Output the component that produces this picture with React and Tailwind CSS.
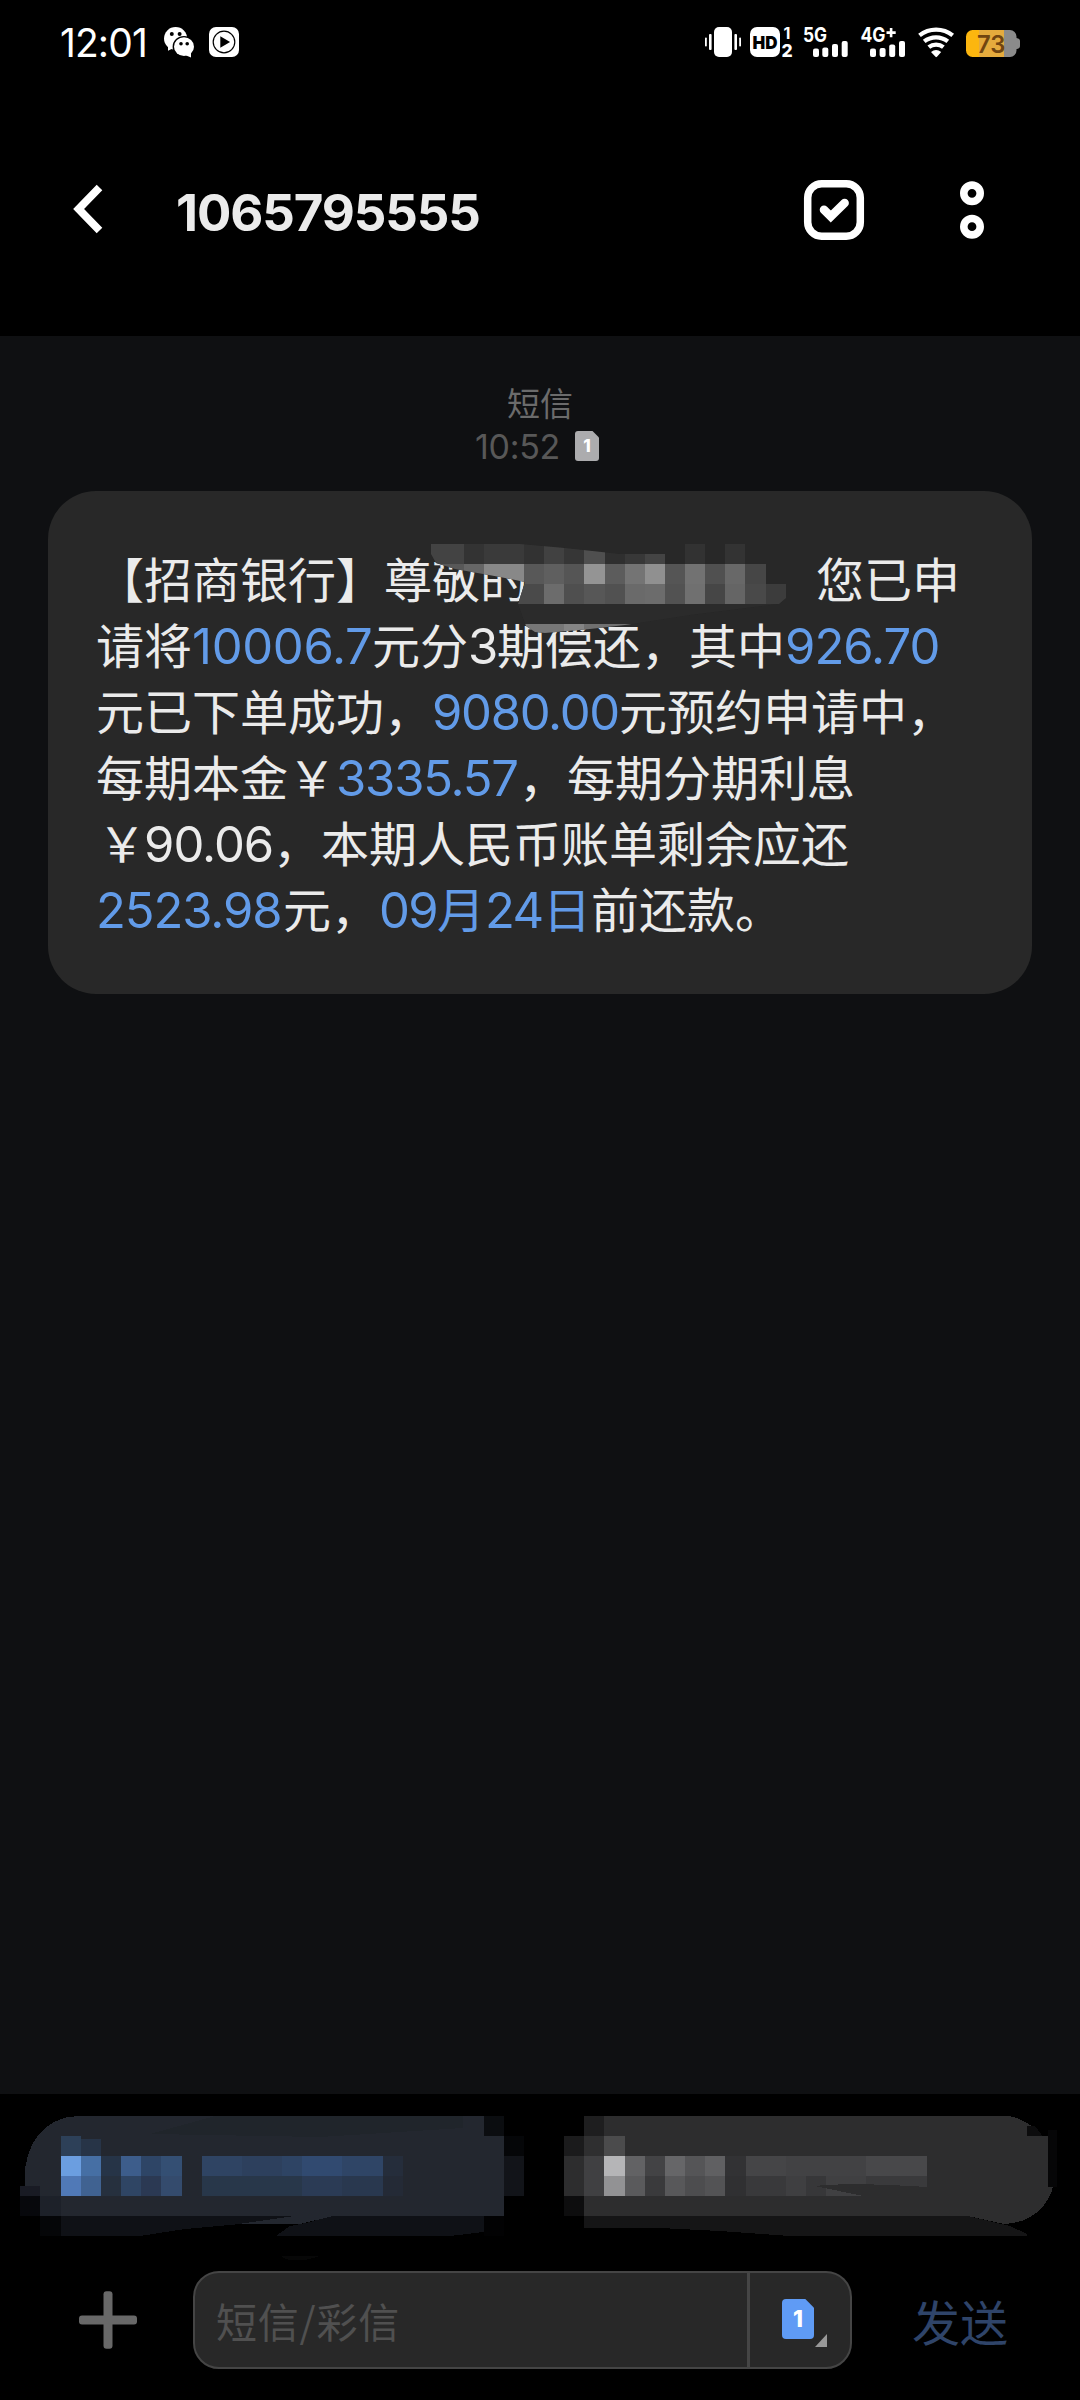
import React from 'react';

const UI_FONT = "font-['Inter','Noto_Sans_CJK_SC',sans-serif]";

// [x, y, width, height, fill]
const nameTiles = [
    [430, 544, 34, 20, '#434343'],
    [464, 544, 20, 20, '#333333'],
    [484, 544, 40, 20, '#3a3a3a'],
    [524, 544, 20, 20, '#323232'],
    [544, 544, 20, 20, '#414141'],
    [564, 544, 20, 20, '#363636'],
    [584, 544, 21, 20, '#4f4f4f'],
    [605, 544, 20, 20, '#2f2f2f'],
    [625, 544, 20, 20, '#383838'],
    [645, 544, 20, 20, '#444444'],
    [685, 544, 20, 20, '#323232'],
    [725, 544, 20, 20, '#333333'],
    [430, 564, 34, 20, '#585858'],
    [464, 564, 20, 20, '#666666'],
    [484, 564, 40, 20, '#888888'],
    [524, 564, 20, 20, '#585858'],
    [544, 564, 20, 20, '#5f5f5f'],
    [564, 564, 20, 20, '#555555'],
    [584, 564, 21, 20, '#949494'],
    [605, 564, 20, 20, '#5c5c5c'],
    [625, 564, 20, 20, '#747474'],
    [645, 564, 20, 20, '#909090'],
    [665, 564, 20, 20, '#555555'],
    [685, 564, 20, 20, '#727272'],
    [705, 564, 20, 20, '#505050'],
    [725, 564, 20, 20, '#686868'],
    [745, 564, 21, 20, '#464646'],
    [510, 584, 34, 20, '#4a4a4a'],
    [544, 584, 20, 20, '#6c6c6c'],
    [564, 584, 20, 20, '#4f4f4f'],
    [584, 584, 21, 20, '#575757'],
    [605, 584, 20, 20, '#515151'],
    [625, 584, 20, 20, '#6a6a6a'],
    [645, 584, 20, 20, '#6c6c6c'],
    [665, 584, 20, 20, '#525252'],
    [685, 584, 20, 20, '#707070'],
    [705, 584, 20, 20, '#464646'],
    [725, 584, 20, 20, '#656565'],
    [745, 584, 21, 20, '#494949'],
    [766, 584, 20, 20, '#3c3c3c'],
    [510, 604, 270, 20, '#2b2b2b'],
    [510, 624, 54, 10, '#777777'],
    [564, 624, 20, 10, '#858585'],
    [584, 624, 50, 10, '#707070']
];

const blueTiles = [
    [20, 2186, 20, 10, '#191b24'],
    [20, 2196, 20, 20, '#07080c'],
    [40, 2196, 20.5, 20, '#1d2129'],
    [40, 2216, 20.5, 20, '#050608'],
    [60.5, 2216, 423, 20, '#0f1116'],
    [483.5, 2116, 20, 19.5, '#0b0d10'],
    [503.5, 2135.5, 20.5, 20, '#050608'],
    [503.5, 2155.5, 20.5, 40.5, '#121419'],
    [483.5, 2216, 20, 20, '#020203'],
    [60.5, 2135.5, 20.3, 20, '#2d4058'],
    [80.8, 2139, 20, 16.5, '#273447'],
    [60.5, 2155.5, 20.3, 20.5, '#6b9ee0'],
    [80.8, 2155.5, 20.2, 20.5, '#466fa4'],
    [101, 2155.5, 20, 20.5, '#263447'],
    [121, 2155.5, 20.2, 20.5, '#3d5d8b'],
    [141.2, 2155.5, 20, 20.5, '#2e4566'],
    [161.2, 2155.5, 20.3, 20.5, '#344f73'],
    [201.5, 2155.5, 40, 20.5, '#2f4463'],
    [241.5, 2155.5, 40, 20.5, '#2d405d'],
    [281.5, 2155.5, 20, 20.5, '#2e4464'],
    [301.5, 2155.5, 40.5, 20.5, '#314a70'],
    [342, 2155.5, 41, 20.5, '#2f4566'],
    [383, 2155.5, 20, 20.5, '#252d3b'],
    [60.5, 2176, 20.3, 20, '#5079b7'],
    [80.8, 2176, 20.2, 20, '#406291'],
    [101, 2176, 20, 20, '#26303e'],
    [121, 2176, 20.2, 20, '#2f4564'],
    [141.2, 2176, 20, 20, '#2b3953'],
    [161.2, 2176, 20.3, 20, '#344b6d'],
    [201.5, 2176, 100, 20, '#28374a'],
    [301.5, 2176, 40.5, 20, '#2b3b55'],
    [342, 2176, 41, 20, '#29384f'],
    [383, 2176, 20, 20, '#242a36']
];

const greyTiles = [
    [564, 2135.5, 20, 20, '#1b1b1c'],
    [584, 2135.5, 20.4, 20, '#2f2f30'],
    [604.4, 2135.5, 20.3, 20, '#4b4b4c'],
    [564, 2155.5, 20, 40.5, '#2d2d2e'],
    [584, 2155.5, 20.4, 40.5, '#404042'],
    [604.4, 2155.5, 20.3, 20.5, '#b5b5b7'],
    [624.7, 2155.5, 20, 20.5, '#626264'],
    [644.7, 2155.5, 20, 20.5, '#434345'],
    [664.7, 2155.5, 20, 20.5, '#666668'],
    [684.7, 2155.5, 20.3, 20.5, '#555557'],
    [705, 2155.5, 20.3, 20.5, '#606062'],
    [725.3, 2155.5, 20.2, 20.5, '#323234'],
    [745.5, 2155.5, 40, 20.5, '#454547'],
    [785.5, 2155.5, 80.5, 20.5, '#424244'],
    [866, 2155.5, 61, 20.5, '#48484a'],
    [604.4, 2176, 20.3, 20, '#929294'],
    [624.7, 2176, 20, 20, '#5a5a5c'],
    [644.7, 2176, 20, 20, '#3a3a3c'],
    [664.7, 2176, 20, 20, '#58585a'],
    [684.7, 2176, 20.3, 20, '#4d4d4f'],
    [705, 2176, 20.3, 20, '#535355'],
    [725.3, 2176, 20.2, 20, '#303032'],
    [745.5, 2176, 40, 20, '#39393b'],
    [785.5, 2176, 20, 20, '#3f3f41'],
    [805.5, 2176, 20.5, 20, '#373739'],
    [826, 2176, 40, 20, '#404042'],
    [866, 2176, 61, 11, '#3a3a3c'],
    [564, 2196, 20, 20, '#0d0d0e']
];

const Tiles = ({ tiles }) =>
    tiles.map(([x, y, width, height, fill]) => (
        <rect key={`${x}-${y}`} x={x} y={y} width={width} height={height} fill={fill} />
    ));

const StatusBar = () => (
    <div className="flex h-[84px] items-center pl-[60px] pr-[58px]">
        <span className="w-[102px] whitespace-nowrap text-[39px] leading-none tracking-[-0.9px] text-white">12:01</span>
        <svg className="ml-px h-[84px] w-[80px]" viewBox="163 0 80 84">
            <ellipse cx="175.6" cy="38.4" rx="11.6" ry="11.3" fill="#fff" />
            <path d="M168 45v5.8l6-3z" fill="#fff" />
            <circle cx="171.8" cy="34" r="2" />
            <circle cx="179.6" cy="34" r="2" />
            <ellipse cx="184" cy="46.7" rx="11.4" ry="10.8" />
            <ellipse cx="184" cy="46.7" rx="10" ry="9.4" fill="#fff" />
            <path d="M185 55l6 2.6v-5z" fill="#fff" />
            <circle cx="181" cy="43.8" r="1.8" />
            <circle cx="187.2" cy="43.8" r="1.8" />
            <rect x="209" y="27" width="30" height="30" rx="7" fill="#fff" />
            <circle cx="224" cy="42" r="10.8" fill="none" stroke="#000" strokeWidth="1.2" />
            <path d="M220.3 36.3l9.8 5.7-9.8 5.7z" />
        </svg>
        <svg className="ml-auto h-[84px] w-[319px]" viewBox="703 0 319 84" fill="#fff">
            <rect x="714" y="27" width="18" height="30" rx="5" />
            <rect x="709" y="34" width="2.6" height="16" rx="1" />
            <rect x="705" y="37.5" width="1.8" height="9" rx=".8" />
            <rect x="734.4" y="34" width="2.6" height="16" rx="1" />
            <rect x="739.2" y="37.5" width="1.8" height="9" rx=".8" />
            <rect x="750" y="27" width="30" height="30" rx="7" />
            <text x="752.5" y="48.5" fontSize="18" fontWeight="900" textLength="25" lengthAdjust="spacingAndGlyphs" fill="#000">HD</text>
            <text x="783.5" y="39" fontSize="16" fontWeight="700">1</text>
            <text x="781.5" y="56.8" fontSize="17.5" fontWeight="800">2</text>
            <text x="803" y="41.5" fontSize="20" fontWeight="700" textLength="24" lengthAdjust="spacingAndGlyphs">5G</text>
            <rect x="813" y="48.5" width="6" height="8.5" rx="2" />
            <rect x="822.3" y="47.5" width="6" height="9.5" rx="2" />
            <rect x="832" y="44" width="6" height="13" rx="2" />
            <rect x="841.7" y="41" width="6" height="16" rx="2" />
            <text x="860.5" y="41.5" fontSize="20" fontWeight="700" textLength="25" lengthAdjust="spacingAndGlyphs">4G</text>
            <path d="M889.8 28h2.6v3.3h3.3v2.6h-3.3v3.3h-2.6v-3.3h-3.3v-2.6h3.3z" />
            <rect x="870" y="48.5" width="6" height="8.5" rx="2" />
            <rect x="879.6" y="48" width="6" height="9" rx="2" />
            <rect x="889.2" y="44.5" width="6" height="12.5" rx="2" />
            <rect x="899" y="41" width="6" height="16" rx="2" />
            <g fill="none" stroke="#fff" strokeWidth="4.3">
                <path d="M919.5 35.4a27 27 0 0 1 33.2 0" />
                <path d="M924.2 41.4a19 19 0 0 1 23.6 0" />
                <path d="M928.8 47.2a11.6 11.6 0 0 1 14.6 0" />
            </g>
            <path d="M936 57.2l-5-5.2q5-3.8 10.2 0l-4 4.6q-.6.6-1.2.6z" />
            <path d="M1004 30h6a6.5 6.5 0 0 1 6.5 6.5v1.5q3.5.5 3.5 3v5q0 2.5-3.5 3v1.5a6.5 6.5 0 0 1-6.5 6.5h-6z" fill="#8b8b8b" />
            <path d="M972.5 30H1004v27h-31.5a6.5 6.5 0 0 1-6.5-6.5v-14a6.5 6.5 0 0 1 6.5-6.5z" fill="#fcb60f" />
            <path d="M979 30h25v27h-25z" fill="#e5ab3d" />
            <text x="977" y="52.7" fontSize="24.5" fontWeight="600" textLength="28.5" lengthAdjust="spacingAndGlyphs" fill="#714510">73</text>
        </svg>
    </div>
);

const Header = () => (
    <div className="flex h-[252px] pl-[68px] pr-[80px]">
        <svg className="mt-[95px] h-[60px] w-[40px]" viewBox="68 179 40 60">
            <path d="M99.5 187.5L78.6 209l20.9 21.5" fill="none" stroke="#fff" strokeWidth="7.8" />
        </svg>
        <h1 className="ml-[68px] mt-[97px] text-[51px] font-bold leading-[64px] tracking-[-1.1px] text-[#ebebeb]">
            1065795555
        </h1>
        <svg className="ml-auto mt-[90px] h-[72px] w-[200px]" viewBox="800 174 200 72" fill="none" stroke="#fff">
            <rect x="807.7" y="183.7" width="52.6" height="52.6" rx="14" strokeWidth="7.5" />
            <path d="M824 209.7l6.8 6.8 13.8-13.5" strokeWidth="8.6" strokeLinecap="round" />
            <circle cx="972" cy="193.3" r="8.2" strokeWidth="7.6" />
            <circle cx="972" cy="226.7" r="8.2" strokeWidth="7.6" />
        </svg>
    </div>
);

const SimIcon = ({ className, fill }) => (
    <svg className={className} viewBox="0 0 24 30">
        <path d="M3 0h14.5L24 6.5V27a3 3 0 0 1-3 3H3a3 3 0 0 1-3-3V3a3 3 0 0 1 3-3z" fill={fill} />
        <text x="12" y="21.3" textAnchor="middle" fontSize="17" fontWeight="800" fill="#fff">1</text>
    </svg>
);

const Num = ({ children, className }) => (
    <span className={`inline-block font-['Inter'] text-[49px] ${className}`}>{children}</span>
);

const Message = () => (
    <div className="relative mx-[48px] mt-[26px] h-[503px] w-[984px] rounded-[48px] bg-[#282828] pl-[48px] pt-[53px]">
        <div className="whitespace-nowrap font-['Noto_Sans_CJK_SC',sans-serif] text-[48px] leading-[66px] text-[#ebebeb]">
            <div className="h-[66px]">
                【招商银行】尊敬的<span className="inline-block w-[240px]" />，您已申
            </div>
            <div className="h-[66px]">
                请将<Num className="w-[180px] tracking-[-0.3px] text-[#629be8]">10006.7</Num>元分
                <Num className="w-[29px] tracking-[-1px]">3</Num>期偿还，其中
                <Num className="w-[156px] tracking-[-1px] text-[#629be8]">926.70</Num>
            </div>
            <div className="h-[66px]">
                元已下单成功，<Num className="w-[187px] tracking-[-1.3px] text-[#629be8]">9080.00</Num>元预约申请中，
            </div>
            <div className="h-[66px]">
                每期本金￥<Num className="w-[183px] tracking-[-1.2px] text-[#629be8]">3335.57</Num>，每期分期利息
            </div>
            <div className="h-[66px]">
                <span className="inline-block w-[48px] pl-[2px]">￥</span>
                <Num className="w-[129px] tracking-[-1px]">90.06</Num>，本期人民币账单剩余应还
            </div>
            <div className="h-[66px]">
                <Num className="w-[187px] tracking-[-1.1px] text-[#629be8]">2523.98</Num>元，
                <span className="text-[#629be8]">
                    <Num className="w-[58px] tracking-[-1.6px]">09</Num>月<Num className="w-[58px] tracking-[-1.6px]">24</Num>日
                </span>
                前还款。
            </div>
        </div>
        <svg className="absolute left-[372px] top-[49px] h-[100px] w-[380px]" viewBox="420 540 380 100">
            <clipPath id="smear">
                <path d="M431 544H520L565 548 620 554H665V544H766V584H786V598L779 604 690 615 625 625 590 629 545 633 535 632 526 626 518 604 525 582 500 577 455 569 436 563 431 554z" />
            </clipPath>
            <g clipPath="url(#smear)">
                <rect x="420" y="540" width="380" height="100" fill="#282828" />
                <Tiles tiles={nameTiles} />
            </g>
        </svg>
    </div>
);

const QuickActions = () => (
    <svg className="block h-[177px] w-[1080px]" viewBox="0 2094 1080 177" shapeRendering="crispEdges">
        <path d="M78 2116H483.5V2135.5H503.5V2216H40V2196L25 2186C22 2150 40 2117 78 2116z" fill="#23272f" />
        <path d="M215 2116H463V2128L320 2137 150 2134z" fill="#20252b" />
        <Tiles tiles={blueTiles} />
        <path d="M140 2236L185 2229 240 2224 295 2216 330 2216 310 2222 290 2226 276 2236z" fill="#000" />
        <path d="M238 2224L295 2216H333L300 2224z" fill="#23272f" />
        <path d="M450 2236L483.5 2232V2236z" fill="#000" />
        <path d="M281 2256H320Q300 2263 286 2259z" fill="#070707" />
        <path d="M584 2216H968L1010 2226 1027 2234V2236H790L720 2231 660 2228H584z" fill="#151516" />
        <path d="M604 2116H1008Q1022 2118 1034 2128L1042 2135.5H1047.6V2187H1053C1048 2206 1032 2223 1004 2224L968 2216H584V2116z" fill="#2d2d2e" />
        <path d="M584 2116h20.4v19.5h-20.4z" fill="#1e1e1f" />
        <path d="M1027 2126h8l7 9.5h-15z" fill="#0c0c0d" />
        <path d="M1047.6 2130h9.7v57h-9.7z" fill="#060607" />
        <Tiles tiles={greyTiles} />
        <path d="M815 2186Q850 2182 927 2187V2196H863z" fill="#2d2d2e" />
    </svg>
);

const Composer = () => (
    <div className="flex h-[98px] items-center pl-[78px]">
        <svg className="h-[60px] w-[60px]" viewBox="78 2290 60 60" fill="#686868">
            <rect x="79" y="2315.5" width="58" height="9" rx="3" />
            <rect x="103.5" y="2291.3" width="9" height="57.5" rx="3" />
        </svg>
        <div className="ml-[55px] flex h-[98px] w-[659px] rounded-[26px] border-[2px] border-[#454545] bg-[#282828]">
            <div className="flex-1 whitespace-nowrap pl-[21px] font-['Noto_Sans_CJK_SC'] text-[41px] leading-[94px] tracking-[0.8px] text-[#505050]">
                短信/彩信
            </div>
            <div className="relative w-[103px] border-l-[3px] border-[#454545]">
                <SimIcon className="absolute left-[32px] top-[26px] h-[40px] w-[32px]" fill="#5f9bf5" />
                <svg className="absolute left-[65px] top-[61px] h-[13px] w-[12px]" viewBox="0 0 12 13">
                    <path d="M12 0v13H0z" fill="#999" />
                </svg>
            </div>
        </div>
        <span className="ml-[60px] font-['Noto_Sans_CJK_SC'] text-[48px] leading-[66px] text-[#2f4469]">发送</span>
    </div>
);

export default () => (
    <div className={`flex h-[2400px] w-[1080px] flex-col overflow-hidden bg-black ${UI_FONT}`}>
        <StatusBar />
        <Header />
        <main className="h-[1758px] bg-[#0f1012]">
            <div className="flex flex-col items-center pt-[42px] text-[33px]">
                <span className="font-['Noto_Sans_CJK_SC'] leading-[48px] text-[#6b6b6b]">短信</span>
                <div className="flex h-[39px] items-center pr-[6px] text-[#585858]">
                    <span className="w-[100px] pt-[2px] text-[34px] leading-[38px] tracking-[-0.3px]">10:52</span>
                    <SimIcon className="h-[30px] w-[24px]" fill="#acacae" />
                </div>
            </div>
            <Message />
        </main>
        <QuickActions />
        <Composer />
    </div>
);
